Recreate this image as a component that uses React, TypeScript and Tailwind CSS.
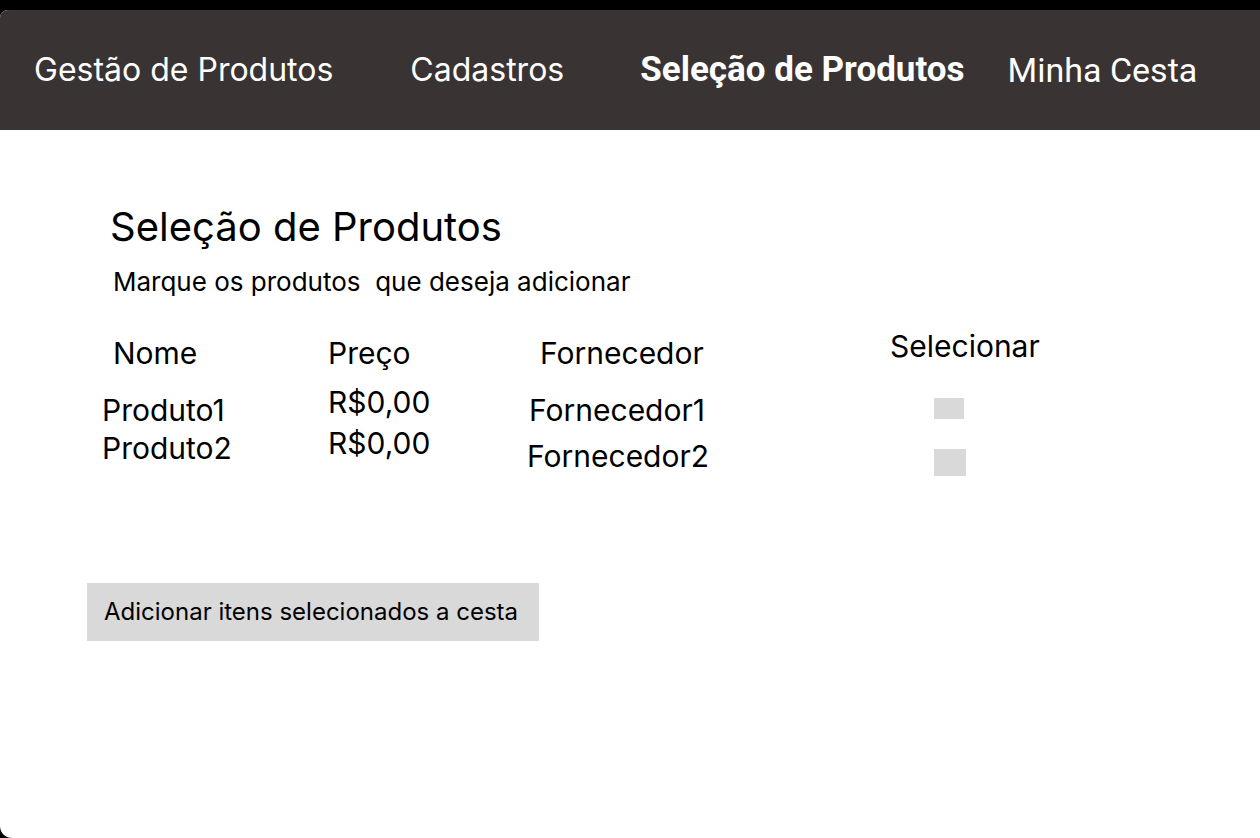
import React from 'react';

const products = [
  { nome: 'Produto1', preco: 'R$0,00', fornecedor: 'Fornecedor1' },
  { nome: 'Produto2', preco: 'R$0,00', fornecedor: 'Fornecedor2' },
];

const inter = "font-['Inter',sans-serif]";

export default function App() {
  return (
    <div className="h-[838px] bg-black pt-[10px]">
      <div className="flex h-full flex-col overflow-hidden rounded-tl-[8px] rounded-bl-[12px] bg-white">
        <nav className={`flex h-[120px] shrink-0 items-center bg-[#393433] pl-[34px] text-[32px] text-white ${inter}`}>
          <span>Gestão de Produtos</span>
          <span className="ml-[77px]">Cadastros</span>
          <span className="ml-[76px] font-['Roboto',sans-serif] text-[35px] font-bold">Seleção de Produtos</span>
          <span className="ml-[43px] font-['Roboto',sans-serif] text-[34px]">Minha Cesta</span>
        </nav>

        <main className={`flex flex-col pl-[87px] text-black ${inter}`}>
          <h1 className="ml-[23px] mt-[73px] text-[40px] leading-[48px]">Seleção de Produtos</h1>
          <p className="ml-[26px] mt-[15px] whitespace-pre text-[26px] leading-[32px]">Marque os produtos  que deseja adicionar</p>

          <div className="mt-[30px] flex text-[30px] leading-[36px]">
            <div className="flex w-[241px] flex-col">
              <span className="ml-[26px] mt-[7px]">Nome</span>
              <div className="mt-[21px] flex flex-col gap-[2px] pl-[15px]">
                {products.map((p) => (
                  <span key={p.nome}>{p.nome}</span>
                ))}
              </div>
            </div>
            <div className="flex w-[199px] flex-col">
              <span className="mt-[7px]">Preço</span>
              <div className="mt-[13px] flex flex-col gap-[5px]">
                {products.map((p, i) => (
                  <span key={i}>{p.preco}</span>
                ))}
              </div>
            </div>
            <div className="flex w-[363px] flex-col">
              <span className="ml-[13px] mt-[7px]">Fornecedor</span>
              <div className="mt-[21px] flex flex-col gap-[10px]">
                <span className="ml-[2px]">{products[0].fornecedor}</span>
                <span>{products[1].fornecedor}</span>
              </div>
            </div>
            <div className="flex flex-col">
              <span>Selecionar</span>
              <div className="ml-[44px] mt-[34px] flex flex-col">
                <span className="h-[21px] w-[30px] bg-[#d9d9d9]" />
                <span className="mt-[30px] h-[27px] w-[32px] bg-[#d9d9d9]" />
              </div>
            </div>
          </div>

          <button className="mt-[107px] h-[58px] w-[452px] bg-[#d9d9d9] pl-[17px] text-left text-[24px]">
            Adicionar itens selecionados a cesta
          </button>
        </main>
      </div>
    </div>
  );
}
